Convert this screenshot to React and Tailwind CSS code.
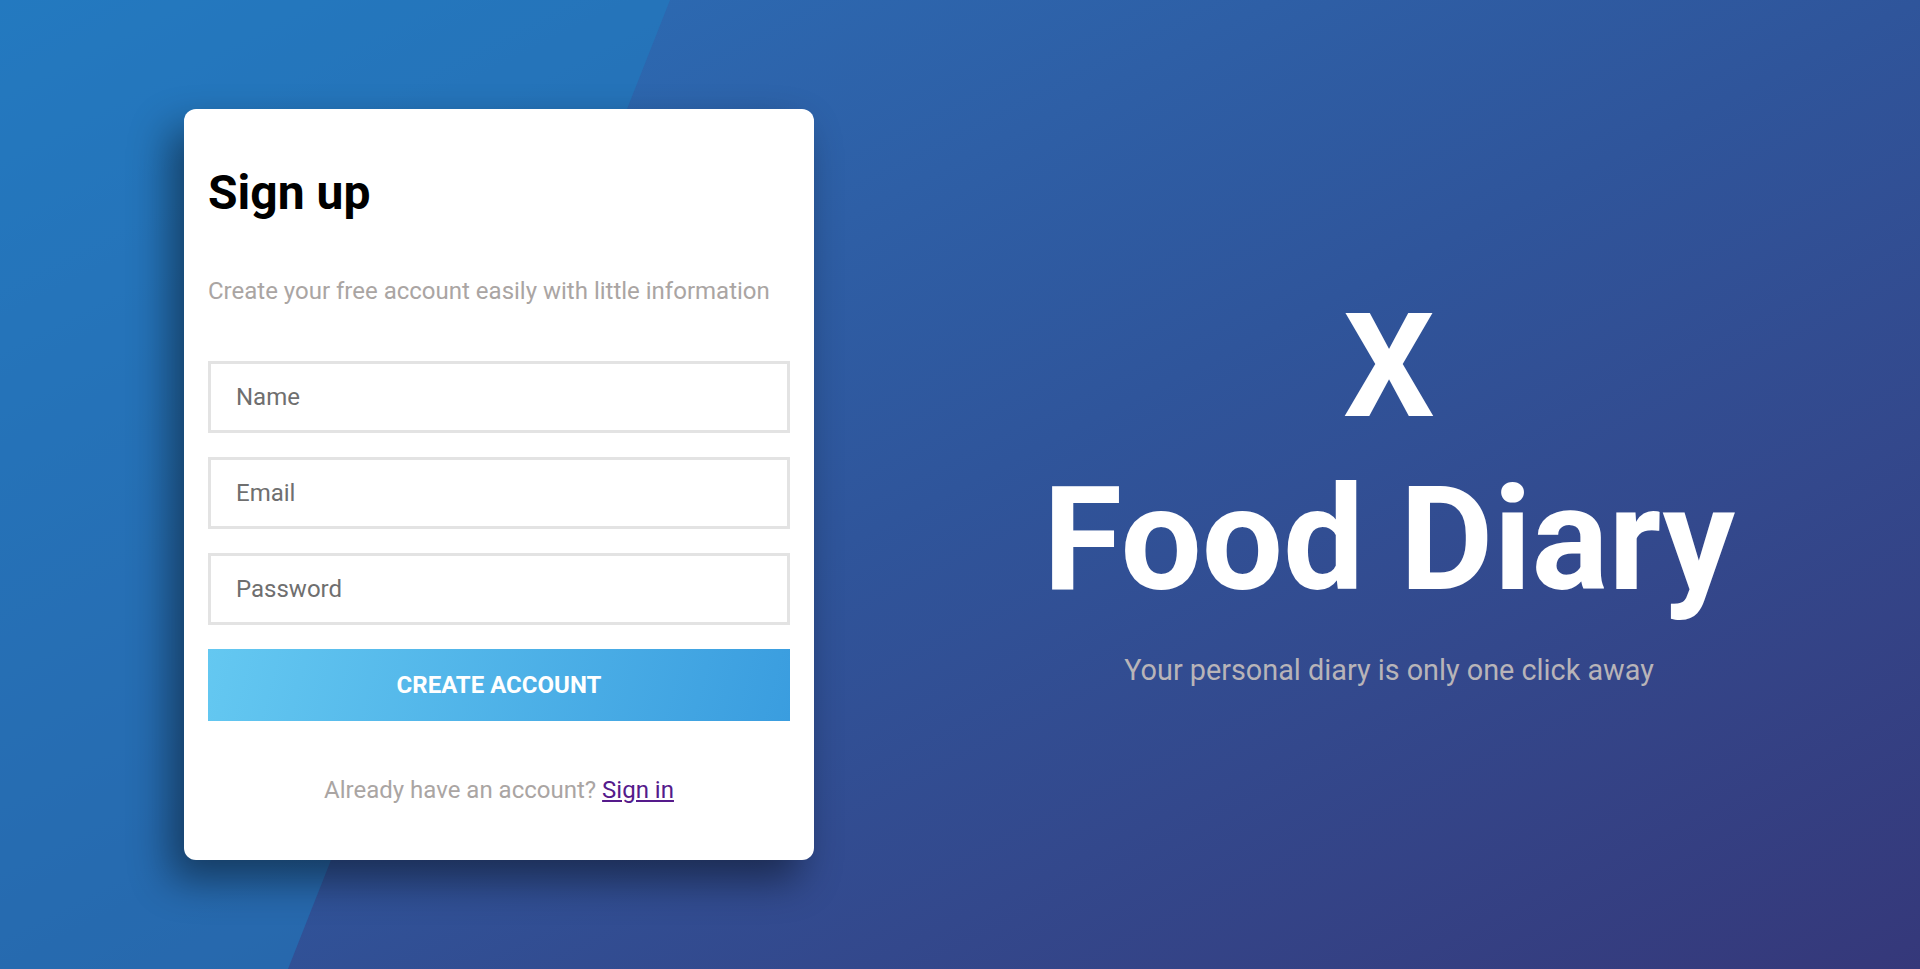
import { useState } from "react";

export default function App() {
  const [form, setForm] = useState({ name: "", email: "", password: "" });

  const update = (key) => (e) => setForm({ ...form, [key]: e.target.value });

  return (
    <div className="relative min-h-screen w-full overflow-hidden bg-linear-to-br from-[#2973bc] via-[#2f559b] to-[#35387a] font-['Roboto',sans-serif]">
      {/* lighter diagonal panel behind the card */}
      <div className="pointer-events-none absolute inset-0 bg-[#1d7fc4]/50 [clip-path:polygon(0_0,670px_0,288px_100%,0_100%)]"></div>

      <div className="relative flex min-h-screen items-center">
        <div className="flex w-[998px] justify-center">
          <div className="w-[630px] rounded-xl bg-white px-6 pt-[56px] pb-[52px] shadow-[-14px_20px_40px_rgba(0,0,0,0.45)]">
            <h1 className="text-[48px] leading-[56px] font-bold text-black">Sign up</h1>
            <p className="mt-[52px] text-[24px] leading-[36px] text-[#aaa5a3]">
              Create your free account easily with little information
            </p>

            <form className="mt-[52px] flex flex-col gap-6" onSubmit={(e) => e.preventDefault()}>
              <input
                type="text"
                placeholder="Name"
                value={form.name}
                onChange={update("name")}
                className="h-[72px] w-full border-[3px] border-[#e3e3e3] px-[25px] text-[24px] text-[#333] outline-none placeholder:text-[#6f6f6f]"
              />
              <input
                type="email"
                placeholder="Email"
                value={form.email}
                onChange={update("email")}
                className="h-[72px] w-full border-[3px] border-[#e3e3e3] px-[25px] text-[24px] text-[#333] outline-none placeholder:text-[#6f6f6f]"
              />
              <input
                type="password"
                placeholder="Password"
                value={form.password}
                onChange={update("password")}
                className="h-[72px] w-full border-[3px] border-[#e3e3e3] px-[25px] text-[24px] text-[#333] outline-none placeholder:text-[#6f6f6f]"
              />
              <button
                type="submit"
                className="h-[72px] w-full bg-linear-[105deg] from-[#64c8f1] to-[#3a9ddf] text-[24px] font-bold text-white uppercase"
              >
                Create account
              </button>
            </form>

            <p className="mt-[51px] text-center text-[24px] leading-[36px] text-[#aaa5a3]">
              Already have an account?{" "}
              <a href="#" className="text-[#551a8b] underline">
                Sign in
              </a>
            </p>
          </div>
        </div>

        <div className="flex-1 pt-[4px] pr-[140px] text-center">
          <h2 className="text-[144px] leading-[1.2] font-bold text-white">
            X
            <br />
            Food Diary
          </h2>
          <p className="mt-[22px] text-[28.8px] leading-[43px] text-[#b8b4b8]">
            Your personal diary is only one click away
          </p>
        </div>
      </div>
    </div>
  );
}
